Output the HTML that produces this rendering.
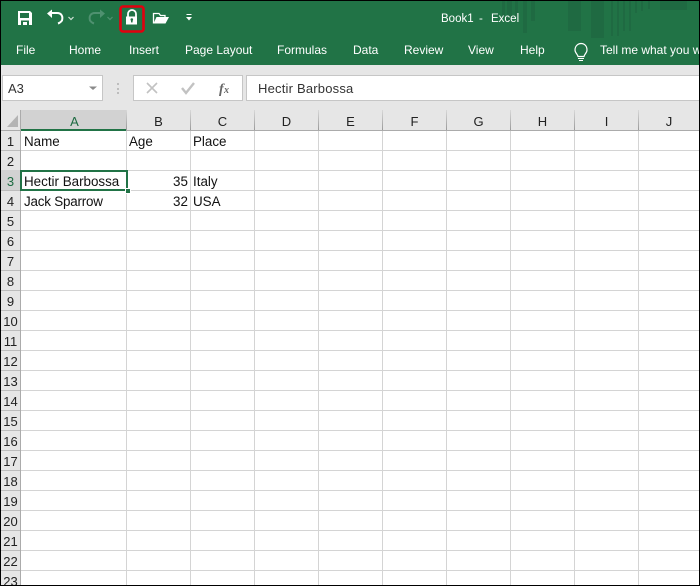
<!DOCTYPE html>
<html><head><meta charset="utf-8"><style>
html,body{margin:0;padding:0;width:700px;height:586px;overflow:hidden;background:#fff}
body{position:relative;font-family:"Liberation Sans",sans-serif;color:#111}
.a{position:absolute;white-space:nowrap}
.t{position:absolute;white-space:nowrap;color:#fff;font-size:12px;line-height:16px;top:42px}
.c{position:absolute;white-space:nowrap;font-size:13.4px;line-height:20px;color:#111}
.h{position:absolute;top:111px;height:20px;line-height:21px;text-align:center;font-size:13px;color:#222}
.r{position:absolute;left:1px;width:19px;text-align:center;font-size:13px;line-height:20px;height:20px;color:#222}
</style></head><body>
<svg class="a" style="left:0;top:0" width="700" height="586">
<defs>
<linearGradient id="hg" x1="0" y1="0" x2="0" y2="1"><stop offset="0" stop-color="#d8d8d8"/><stop offset="1" stop-color="#9a9a9a"/></linearGradient>
<pattern id="gx" x="62" y="0" width="64" height="20" patternUnits="userSpaceOnUse"><rect x="0" y="0" width="1" height="20" fill="#d4d4d4"/></pattern>
<pattern id="gy" x="0" y="130" width="20" height="20" patternUnits="userSpaceOnUse"><rect x="0" y="0" width="20" height="1" fill="#d4d4d4"/></pattern>
<pattern id="ry" x="0" y="130" width="20" height="20" patternUnits="userSpaceOnUse"><rect x="0" y="0" width="20" height="1" fill="#bcbcbc"/></pattern>
<pattern id="hx" x="62" y="110" width="64" height="20" patternUnits="userSpaceOnUse"><rect x="0" y="0" width="1" height="20" fill="url(#hg)"/></pattern>
</defs>
<g shape-rendering="crispEdges">
<rect width="700" height="65" fill="#217346"/>
<rect y="65" width="700" height="65" fill="#e6e6e6"/>
<g fill="#1f6a42">
<rect x="502" y="1" width="3" height="16"/><rect x="507" y="1" width="5" height="20"/><rect x="515" y="1" width="3" height="16"/><rect x="523" y="1" width="4" height="32"/><rect x="531" y="1" width="4" height="20"/>
<rect x="568" y="1" width="13" height="30"/><rect x="591" y="1" width="13" height="37"/>
<rect x="611" y="1" width="2" height="35"/><rect x="617" y="1" width="2" height="35"/><rect x="623" y="1" width="2" height="30"/><rect x="629" y="1" width="2" height="30"/><rect x="635" y="1" width="2" height="12"/><rect x="641" y="1" width="2" height="10"/><rect x="648" y="1" width="2" height="8"/>
<rect x="660" y="1" width="27" height="9"/>
</g>
<rect x="2.5" y="75.5" width="100" height="25" fill="#fff" stroke="#c6c6c6"/>
<rect x="133.5" y="75.5" width="109" height="25" fill="#fff" stroke="#c6c6c6"/>
<rect x="246.5" y="75.5" width="454" height="25" fill="#fff" stroke="#c6c6c6"/>
<rect x="21" y="110" width="105" height="20" fill="#d2d2d2"/>
<rect x="0" y="130" width="21" height="456" fill="#e6e6e6"/>
<rect x="126" y="130" width="574" height="456" fill="url(#gx)"/>
<rect x="21" y="150" width="679" height="436" fill="url(#gy)"/>
<rect x="1" y="150" width="20" height="436" fill="url(#ry)"/>
<rect x="126" y="110" width="574" height="20" fill="url(#hx)"/>
<rect x="0" y="130" width="700" height="1" fill="#ababab"/>
<rect x="20" y="110" width="1" height="476" fill="#ababab"/>
<rect x="21" y="129" width="105" height="2" fill="#217346"/>
<rect x="1" y="170" width="19" height="20" fill="#d2d2d2"/>
<rect x="20" y="170" width="107" height="2" fill="#217346"/>
<rect x="20" y="189" width="107" height="2" fill="#217346"/>
<rect x="20" y="170" width="2" height="21" fill="#217346"/>
<rect x="126" y="170" width="2" height="21" fill="#217346"/>
<rect x="125.5" y="188.5" width="5" height="5" fill="#217346" stroke="#fff"/>
<rect x="0" y="0" width="700" height="1" fill="#000"/>
<rect x="0" y="0" width="1" height="586" fill="#000"/>
<rect x="699" y="0" width="1" height="586" fill="#000"/>
<rect x="0" y="585" width="700" height="1" fill="#000"/>
</g>
<path d="M7 127L18 115V127Z" fill="#b4b4b4"/>
<path d="M18 11H30L32 13V25H18Z" fill="#fff"/>
<path d="M20 13H29V18H20Z" fill="#217346"/>
<path d="M21 20.5H29V25H27V22H23V25H21Z" fill="#217346"/>
<path d="M52 13H57C62 13 63 17 62 20.5C61 22 59.5 23 58 23.5" fill="none" stroke="#fff" stroke-width="2"/>
<path d="M47 13.5L52 9.5V18Z" fill="#fff"/>
<path d="M68.5 17L71 19.5L73.5 17" fill="none" stroke="#cfe0d6" stroke-width="1.2"/>
<path d="M100 13H95C90 13 89 17 90 20.5C91 22 92.5 23 94 23.5" fill="none" stroke="#4f9170" stroke-width="2"/>
<path d="M105 13.5L100 9.5V18Z" fill="#4f9170"/>
<path d="M107.5 17L110 19.5L112.5 17" fill="none" stroke="#4f9170" stroke-width="1.2"/>
<rect x="120.5" y="6.5" width="23" height="25" rx="2.5" fill="none" stroke="#e3000f" stroke-width="2.6"/>
<path d="M128 17V14A4 4 0 0 1 136 14V17" fill="none" stroke="#fff" stroke-width="1.8"/>
<rect x="126" y="16.5" width="11" height="8" fill="#fff"/>
<rect x="131" y="19" width="1.6" height="3.4" fill="#217346"/>
<circle cx="131.8" cy="19.5" r="1.3" fill="#217346"/>
<path d="M153.5 23.5V13.5H159L160.5 15.5H165V17" fill="none" stroke="#fff" stroke-width="1.3"/>
<path d="M153.5 23.5L156.5 17H169L165.5 23.5Z" fill="#fff"/>
<rect x="186.5" y="14" width="5" height="1" fill="#fff"/>
<path d="M186 17H192L189 20.5Z" fill="#fff"/>
<path d="M575 50C575 46 578 43.5 581 43.5C584.5 43.5 587 46 587 50C587 53 584.5 54 584 56.5H578C577.5 54 575 53 575 50Z" fill="none" stroke="#fff" stroke-width="1.2"/>
<path d="M578 58.5H584M579 60.5H583" stroke="#fff" stroke-width="1"/>
<path d="M89 86.5H97L93 90Z" fill="#8a8a8a"/>
<g fill="#bdbdbd"><rect x="117" y="83" width="2" height="2"/><rect x="117" y="88" width="2" height="2"/><rect x="117" y="92" width="2" height="2"/></g>
<path d="M147 83L157 93M157 83L147 93" stroke="#c2c2c2" stroke-width="1.6"/>
<path d="M182 88L186 93L194 83" fill="none" stroke="#c2c2c2" stroke-width="2.4"/>
<text x="219" y="93" font-family="Liberation Serif" font-style="italic" font-weight="bold" font-size="14" fill="#666">f</text>
<text x="224" y="93" font-family="Liberation Serif" font-style="italic" font-weight="bold" font-size="10" fill="#666">x</text>
</svg>
<div class="a" style="left:441px;top:11px;font-size:11.5px;line-height:16px;color:#fff">Book1</div>
<div class="a" style="left:479px;top:11px;font-size:11.5px;line-height:16px;color:#fff">-</div>
<div class="a" style="left:491px;top:11px;font-size:11.5px;line-height:16px;color:#fff">Excel</div>
<div class="t" style="left:16px">File</div>
<div class="t" style="left:69px">Home</div>
<div class="t" style="left:129px">Insert</div>
<div class="t" style="left:185px">Page Layout</div>
<div class="t" style="left:277px">Formulas</div>
<div class="t" style="left:353px">Data</div>
<div class="t" style="left:404px">Review</div>
<div class="t" style="left:468px">View</div>
<div class="t" style="left:520px">Help</div>
<div class="t" style="left:600px;width:99px;overflow:hidden">Tell me what you want to do</div>
<div class="a" style="left:8px;top:81px;font-size:13px;line-height:16px;color:#333">A3</div>
<div class="a" style="left:258px;top:81px;font-size:13px;line-height:16px;color:#333;letter-spacing:.2px">Hectir Barbossa</div>
<div class="h" style="left:22px;width:105px;color:#1d6a41">A</div>
<div class="h" style="left:127px;width:63px">B</div>
<div class="h" style="left:191px;width:63px">C</div>
<div class="h" style="left:255px;width:63px">D</div>
<div class="h" style="left:319px;width:63px">E</div>
<div class="h" style="left:383px;width:63px">F</div>
<div class="h" style="left:447px;width:63px">G</div>
<div class="h" style="left:511px;width:63px">H</div>
<div class="h" style="left:575px;width:63px">I</div>
<div class="h" style="left:639px;width:60px">J</div>
<div class="r" style="top:132px">1</div>
<div class="r" style="top:152px">2</div>
<div class="r" style="top:172px;color:#1d6a41">3</div>
<div class="r" style="top:192px">4</div>
<div class="r" style="top:212px">5</div>
<div class="r" style="top:232px">6</div>
<div class="r" style="top:252px">7</div>
<div class="r" style="top:272px">8</div>
<div class="r" style="top:292px">9</div>
<div class="r" style="top:312px">10</div>
<div class="r" style="top:332px">11</div>
<div class="r" style="top:352px">12</div>
<div class="r" style="top:372px">13</div>
<div class="r" style="top:392px">14</div>
<div class="r" style="top:412px">15</div>
<div class="r" style="top:432px">16</div>
<div class="r" style="top:452px">17</div>
<div class="r" style="top:472px">18</div>
<div class="r" style="top:492px">19</div>
<div class="r" style="top:512px">20</div>
<div class="r" style="top:532px">21</div>
<div class="r" style="top:552px">22</div>
<div class="r" style="top:572px;height:13px;overflow:hidden">23</div>
<div class="c" style="left:24px;top:132px">Name</div>
<div class="c" style="left:129px;top:132px">Age</div>
<div class="c" style="left:193px;top:132px">Place</div>
<div class="c" style="left:24px;top:172px">Hectir Barbossa</div>
<div class="c" style="left:173px;top:172px">35</div>
<div class="c" style="left:193px;top:172px">Italy</div>
<div class="c" style="left:24px;top:192px;letter-spacing:-.2px">Jack Sparrow</div>
<div class="c" style="left:173px;top:192px">32</div>
<div class="c" style="left:193px;top:192px">USA</div>
</body></html>
